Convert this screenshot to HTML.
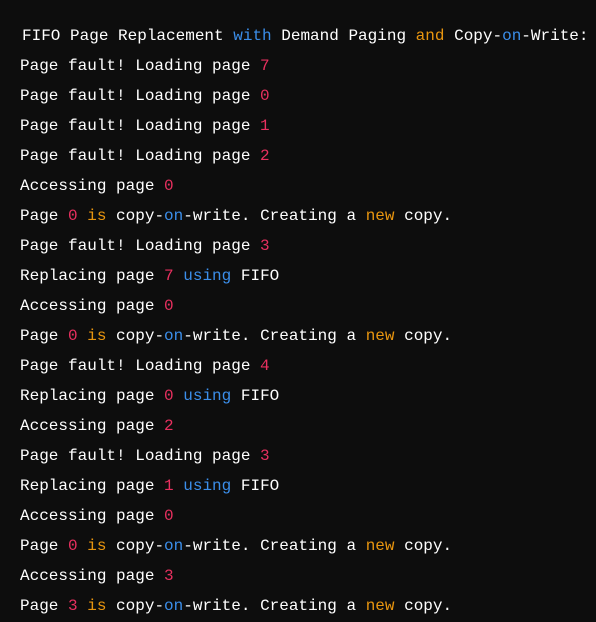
<!DOCTYPE html>
<html><head><style>
html,body{margin:0;padding:0;background:#0d0d0d;width:596px;height:622px;overflow:hidden}
pre{margin:0;position:absolute;left:20px;top:21px;font-family:"Liberation Mono",monospace;font-size:16px;line-height:30px;color:#ffffff}
.b{color:#3b8eea}.o{color:#e8950f}.r{color:#e8305f}
.f{padding-left:2px}
</style></head><body>
<pre><span class="f">FIFO Page Replacement <span class="b">with</span> Demand Paging <span class="o">and</span> Copy-<span class="b">on</span>-Write:</span>
Page fault! Loading page <span class="r">7</span>
Page fault! Loading page <span class="r">0</span>
Page fault! Loading page <span class="r">1</span>
Page fault! Loading page <span class="r">2</span>
Accessing page <span class="r">0</span>
Page <span class="r">0</span> <span class="o">is</span> copy-<span class="b">on</span>-write. Creating a <span class="o">new</span> copy.
Page fault! Loading page <span class="r">3</span>
Replacing page <span class="r">7</span> <span class="b">using</span> FIFO
Accessing page <span class="r">0</span>
Page <span class="r">0</span> <span class="o">is</span> copy-<span class="b">on</span>-write. Creating a <span class="o">new</span> copy.
Page fault! Loading page <span class="r">4</span>
Replacing page <span class="r">0</span> <span class="b">using</span> FIFO
Accessing page <span class="r">2</span>
Page fault! Loading page <span class="r">3</span>
Replacing page <span class="r">1</span> <span class="b">using</span> FIFO
Accessing page <span class="r">0</span>
Page <span class="r">0</span> <span class="o">is</span> copy-<span class="b">on</span>-write. Creating a <span class="o">new</span> copy.
Accessing page <span class="r">3</span>
Page <span class="r">3</span> <span class="o">is</span> copy-<span class="b">on</span>-write. Creating a <span class="o">new</span> copy.</pre>
</body></html>
